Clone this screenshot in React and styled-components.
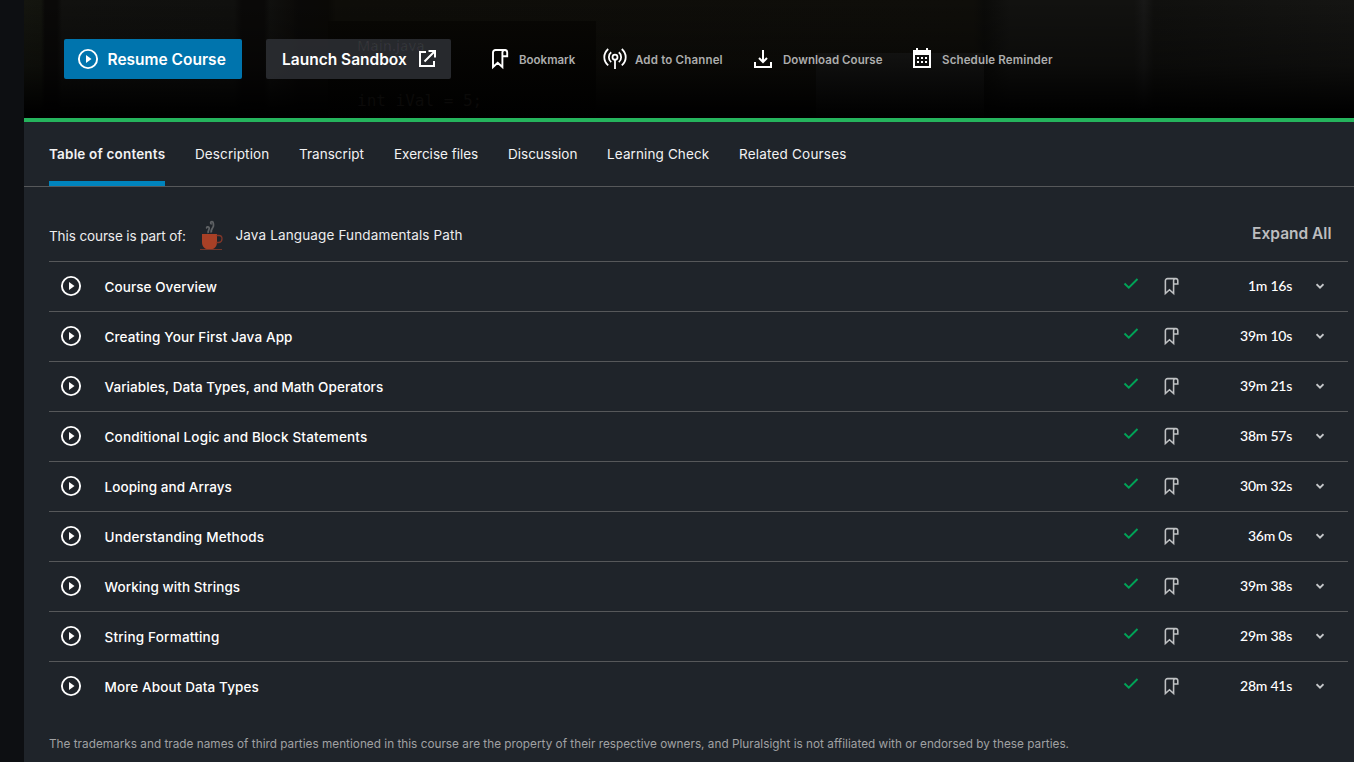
import React from 'react';
import styled, { createGlobalStyle } from 'styled-components';

const GlobalStyle = createGlobalStyle`
  *, *::before, *::after { box-sizing: border-box; }
  body { margin: 0; background: #1f242a; font-family: Inter, "Liberation Sans", sans-serif; overflow: hidden; }
  button { font: inherit; border: 0; background: none; padding: 0; }
  svg { display: block; flex: none; }
`;

const Page = styled.div`
  display: flex;
  height: 762px;
  overflow: hidden;
  background: #1f242a;
`;
const Rail = styled.aside`
  width: 24px;
  flex: none;
  background: #0d0f12;
`;
const Main = styled.main`
  flex: 1;
  min-width: 0;
`;

const Hero = styled.header`
  position: relative;
  display: flex;
  align-items: flex-start;
  height: 122px;
  padding: 39px 0 0 40px;
  border-bottom: 4px solid #25b45d;
  background:
    linear-gradient(180deg, rgba(0, 0, 0, 0) 0%, rgba(0, 0, 0, 0.35) 55%, #000 96%),
    linear-gradient(90deg, #14150f 0, #13140e 17px, #0a0908 21px, #0a0908 33px, #11110f 38px, #10100e 210px, #0a0908 218px, #0a0908 240px, #10100e 246px, #0d0c0a 266px, #0a0908 274px, #0a0906 304px, #0e0d09 312px, #0f0e0a 950px, #0b0b09 960px, #121210 986px, #121210 1110px, #181817 1120px, #10100e 1130px, #151513 1330px);
`;
const Backdrop = styled.div`
  position: absolute;
  overflow: hidden;
  inset: 0;
`;
const EditorPane = styled.div`
  position: absolute;
  left: 304px;
  top: 21px;
  width: 268px;
  height: 97px;
  background: linear-gradient(#080704, #000);
`;
const Monitor = styled.div`
  position: absolute;
  left: 792px;
  top: 53px;
  width: 168px;
  height: 65px;
  background: linear-gradient(#121211, #000);
`;
const CodeText = styled.span`
  position: absolute;
  left: ${p => p.$x}px;
  top: ${p => p.$y}px;
  white-space: pre;
  font: ${p => (p.$mono ? '16px/20px "DejaVu Sans Mono", monospace' : '600 14.5px/12px "Open Sans", sans-serif')};
  letter-spacing: 0;
  color: ${p => p.$color};
`;

const Button = styled.button`
  position: relative;
  display: flex;
  align-items: center;
  width: ${p => p.$width}px;
  height: 40px;
  padding-left: ${p => p.$pad}px;
  gap: ${p => p.$gap}px;
  margin-right: 24px;
  border-radius: 2px;
  color: #fff;
  background: ${p => (p.$primary ? '#0074ad' : 'rgba(44, 47, 51, 0.88)')};
  font-size: 15.5px;
  font-weight: 600;
  white-space: nowrap;
`;
const Action = styled.button`
  display: flex;
  align-items: center;
  height: 40px;
  width: ${p => p.$width}px;
  gap: ${p => p.$gap}px;
  color: #adadad;
  font-size: 11.5px;
  font-weight: 600;
  letter-spacing: ${p => p.$track}px;
  white-space: nowrap;
`;
const ActionLabel = styled.span`
  padding-top: 2px;
`;
const Actions = styled.div`
  position: relative;
  display: flex;
  padding-left: 13px;
`;

const Tabs = styled.nav`
  display: flex;
  gap: 30px;
  height: 65px;
  padding-left: 25px;
  border-bottom: 1px solid #56585a;
`;
const Tab = styled.a`
  height: 64px;
  width: ${p => p.$width}px;
  line-height: 65px;
  font-size: 13.5px;
  font-weight: ${p => (p.$active ? 600 : 400)};
  letter-spacing: ${p => p.$track}px;
  white-space: nowrap;
  color: #f2f2f3;
  border-bottom: 5px solid ${p => (p.$active ? '#0084bd' : 'transparent')};
`;

const Content = styled.section`
  padding: 0 6px 0 25px;
`;
const PathBar = styled.div`
  display: flex;
  align-items: center;
  height: 74px;
  padding: 24px 16.5px 2px 0;
  font-size: 13.5px;
  color: #ededee;
`;
const PathIntro = styled.span`
  width: 150px;
  padding-top: 2px;
  letter-spacing: ${p => p.$track}px;
  white-space: nowrap;
`;
const PathName = styled.span`
  flex: 1;
  padding-left: 12.5px;
  letter-spacing: ${p => p.$track}px;
`;
const ExpandAll = styled.button`
  margin-top: -4px;
  font-size: 15.5px;
  font-weight: 600;
  color: #bcbdbf;
`;

const Row = styled.div`
  display: flex;
  align-items: center;
  height: 50px;
  padding: 0 24px 2px 10px;
  border-top: 1px solid #56585a;
  font-size: 13.5px;
  color: #fff;
`;
const RowTitle = styled.span`
  flex: 1;
  padding: 2px 0 0 21.5px;
  font-weight: 500;
  letter-spacing: ${p => p.$track}px;
`;
const Duration = styled.span`
  width: 110px;
  text-align: right;
  font-family: Lato, Inter, sans-serif;
  font-size: 14px;
  font-weight: 500;
  letter-spacing: -0.25px;
  margin-right: 24px;
`;
const CheckSlot = styled.span`
  width: 38px;
  padding-bottom: 3px;
`;
const MarkSlot = styled.span`
  padding-top: 1.5px;
`;
const Legal = styled.p`
  margin: 25px 0 0;
  font-size: 11.75px;
  line-height: 16px;
  color: #a0a1a3;
  letter-spacing: 0.018px;
  white-space: nowrap;
`;

const PlayIcon = () => (
  <svg width="24" height="24" viewBox="0 0 24 24" fill="none">
    <circle cx="12" cy="12" r="9.1" stroke="#fff" strokeWidth="1.9" />
    <path d="M10 8v8l5.5-4z" fill="#fff" />
  </svg>
);
const LaunchIcon = () => (
  <svg width="24" height="24" viewBox="0 0 24 24" fill="none" stroke="#fff" strokeWidth="2">
    <path d="M10 5H4v14h14v-5" />
    <path d="M12.5 4H19v6.5M18.5 4.5L8.5 14.5" />
  </svg>
);
const BookmarkIcon = ({ size = 24, color = '#fff', stroke = 1.9 }) => (
  <svg width={size} height={size} viewBox="0 0 24 24" fill="none" stroke={color} strokeWidth={stroke}>
    <path d="M17.8 3H7.5a2.5 2.5 0 0 0-2.5 2.5V20l4.7-4.3 4.7 4.3V5.5A2.3 2.3 0 0 1 16.7 3c1.6 0 2.5 1.1 2.5 2.5v3.7h-4.8" />
  </svg>
);
const ChannelIcon = () => (
  <svg width="24" height="24" viewBox="0 0 24 24" fill="none" stroke="#fff" strokeWidth="1.8">
    <circle cx="12" cy="10.2" r="2.5" />
    <path d="M12 12.7V22" />
    <path d="M8.2 5.3a6.3 6.3 0 0 0 0 9.8M15.8 5.3a6.3 6.3 0 0 1 0 9.8" />
    <path d="M5.2 2c-5.2 4.6-5.2 11.8 0 16.4M18.8 2c5.2 4.6 5.2 11.8 0 16.4" />
  </svg>
);
const DownloadIcon = () => (
  <svg width="24" height="24" viewBox="0 0 24 24" fill="none" stroke="#fff" strokeWidth="2">
    <path d="M12 3v12M8 11l4 4 4-4M4 15v5h16v-5" />
  </svg>
);
const CalendarIcon = () => (
  <svg width="24" height="24" viewBox="0 0 24 24" fill="#fff">
    <path fillRule="evenodd" d="M3 3h3V1h2v2h8V1h2v2h3v18H3zm2 5v11h14V8z" />
    <path d="M7 10h2v2H7zM11 10h2v2h-2zM15 10h2v2h-2zM7 14h2v2H7zM11 14h2v2h-2zM15 14h2v2h-2z" />
  </svg>
);
const CheckIcon = () => (
  <svg width="16" height="16" viewBox="0 0 16 16" fill="none" stroke="#00a357" strokeWidth="2">
    <path d="M1.5 7.5L5.8 11.7L14.5 3" />
  </svg>
);
const ChevronIcon = () => (
  <svg width="8" height="8" viewBox="0 0 8 8" fill="none" stroke="#c6c8ca" strokeWidth="1.9">
    <path d="M.5 2.2L4 5.6L7.5 2.2" />
  </svg>
);
const CupIcon = () => (
  <svg width="24" height="32" viewBox="0 0 24 32" fill="none">
    <path d="M3 15h15v8c0 4-2 6.5-4.5 7h-6C5 29.5 3 27 3 23z" fill="#a84026" />
    <path d="M17.5 16.5h2.500c4 0 4 6.500 0 7h-2.500" stroke="#7f3629" strokeWidth="1.3" />
    <path d="M1 30.500h22" stroke="#71362b" />
    <path d="M9.500 14c-1.500-2.500 1.700-3.500.5-5.500-.8-1.300-3-.5-2.100 1M12.500 13.500c-1.700-3 2.600-5 2-7.500-.4-1.500.2-3-1.400-3.300-1.700-.2-2 2-.4 2.500" stroke="#5e6164" strokeWidth="1.8" />
  </svg>
);

const actions = [
  ['Bookmark', BookmarkIcon, 115, 7, 0],
  ['Add to Channel', ChannelIcon, 148, 8, 0.18],
  ['Download Course', DownloadIcon, 159, 8, 0.05],
  ['Schedule Reminder', CalendarIcon, 143, 8, 0.15],
];
const tabs = [
  ['Table of contents', 116, 0.18], ['Description', 74, 0.12], ['Transcript', 65, 0.03],
  ['Exercise files', 84, 0], ['Discussion', 69, 0], ['Learning Check', 102, 0.12], ['Related Courses', 107, 0.2],
];
const lessons = [
  ['Course Overview', '1m 16s', 0.07],
  ['Creating Your First Java App', '39m 10s', 0.13],
  ['Variables, Data Types, and Math Operators', '39m 21s', 0.06],
  ['Conditional Logic and Block Statements', '38m 57s', 0.18],
  ['Looping and Arrays', '30m 32s', 0.07],
  ['Understanding Methods', '36m 0s', 0.18],
  ['Working with Strings', '39m 38s', 0.07],
  ['String Formatting', '29m 38s', 0.2],
  ['More About Data Types', '28m 41s', 0.12],
];

export default function App() {
  return (
    <Page>
      <GlobalStyle />
      <Rail />
      <Main>
        <Hero>
          <Backdrop>
            <EditorPane />
            <Monitor />
            <CodeText $x={333} $y={91} $mono $color="#0b0a09">int iVal = 5;</CodeText>
          </Backdrop>
          <Button $primary $width={178} $pad={12} $gap={7.5}><PlayIcon />Resume Course</Button>
          <Button $width={185} $pad={16} $gap={9}>
            Launch Sandbox<LaunchIcon />
            <CodeText $x={91} $y={1} $color="rgba(255,255,255,.06)">Main.java</CodeText>
          </Button>
          <Actions>
            {actions.map(([name, Icon, width, gap, track]) => (
              <Action key={name} $width={width} $gap={gap} $track={track}>
                <Icon /><ActionLabel>{name}</ActionLabel>
              </Action>
            ))}
          </Actions>
        </Hero>
        <Tabs>
          {tabs.map(([name, width, track], i) => (
            <Tab key={name} $width={width} $track={track} $active={i === 0}>{name}</Tab>
          ))}
        </Tabs>
        <Content>
          <PathBar>
            <PathIntro $track={-0.1}>This course is part of:</PathIntro>
            <CupIcon />
            <PathName $track={0.14}>Java Language Fundamentals Path</PathName>
            <ExpandAll>Expand All</ExpandAll>
          </PathBar>
          {lessons.map(([title, time, track]) => (
            <Row key={title}>
              <PlayIcon />
              <RowTitle $track={track}>{title}</RowTitle>
              <CheckSlot><CheckIcon /></CheckSlot>
              <MarkSlot><BookmarkIcon size={21} color="#bfc1c3" stroke={1.8} /></MarkSlot>
              <Duration>{time}</Duration>
              <ChevronIcon />
            </Row>
          ))}
          <Legal>The trademarks and trade names of third parties mentioned in this course are the property of their respective owners, and Pluralsight is not affiliated with or endorsed by these parties.</Legal>
        </Content>
      </Main>
    </Page>
  );
}
